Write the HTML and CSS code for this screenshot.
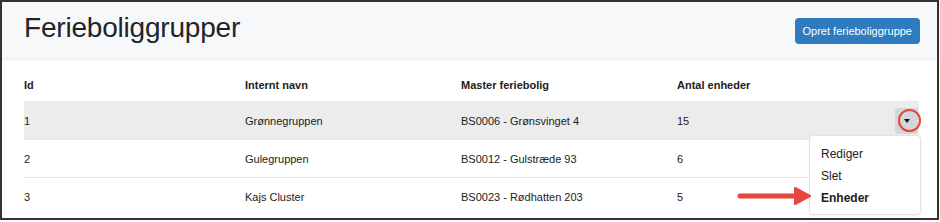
FILE: index.html
```html
<!DOCTYPE html>
<html lang="da">
<head>
<meta charset="UTF-8">
<meta name="viewport" content="width=device-width, initial-scale=1.0">
<title>Ferieboliggrupper</title>
<link rel="stylesheet" href="styles.css">
</head>
<body>
<div class="frame">
    <div class="page-header">
        <h1>Ferieboliggrupper</h1>
        <button class="btn-primary">Opret ferieboliggruppe</button>
    </div>

    <div class="content">
        <table class="group-table">
            <thead>
                <tr>
                    <th>Id</th>
                    <th>Internt navn</th>
                    <th>Master feriebolig</th>
                    <th>Antal enheder</th>
                    <th class="actions"></th>
                </tr>
            </thead>
            <tbody>
                <tr class="active">
                    <td>1</td>
                    <td>Grønnegruppen</td>
                    <td>BS0006 - Grønsvinget 4</td>
                    <td>15</td>
                    <td class="actions">
                        <span class="toggle"><span class="caret"></span></span>
                    </td>
                </tr>
                <tr>
                    <td>2</td>
                    <td>Gulegruppen</td>
                    <td>BS0012 - Gulstræde 93</td>
                    <td>6</td>
                    <td class="actions"></td>
                </tr>
                <tr>
                    <td>3</td>
                    <td>Kajs Cluster</td>
                    <td>BS0023 - Rødhatten 203</td>
                    <td>5</td>
                    <td class="actions"></td>
                </tr>
            </tbody>
        </table>

        <ul class="dropdown-menu">
            <li>Rediger</li>
            <li>Slet</li>
            <li class="strong">Enheder</li>
        </ul>

        <!-- annotation -->
        <svg class="arrow" width="76" height="20" viewBox="0 0 76 20">
            <line x1="3" y1="10" x2="62" y2="10" stroke="#e8453c" stroke-width="5" stroke-linecap="round"/>
            <polygon points="58,2 73,10 58,18" fill="#e8453c" stroke="#e8453c" stroke-width="2" stroke-linejoin="round"/>
        </svg>
        <span class="ring"></span>
    </div>
</div>
</body>
</html>
```

FILE: styles.css
```css
body {
    font-family: "Liberation Sans", Arial, sans-serif;
    margin: 0;
    background-color: #fff;
    color: #222;
}
.frame {
    width: 939px;
    height: 220px;
    box-sizing: border-box;
    border: 2px solid #333;
    overflow: hidden;
}
.page-header {
    display: flex;
    align-items: center;
    justify-content: space-between;
    height: 56px;
    padding: 0 17px 0 22px;
    background-color: #f7f8fa;
    box-shadow: 0 1px 2px rgba(0, 0, 0, 0.06);
    border-bottom: 1px solid #eceef0;
}
.page-header h1 {
    margin: 0;
    font-size: 28px;
    font-weight: normal;
    letter-spacing: -0.2px;
    color: #212529;
    padding-bottom: 4px;
}
.btn-primary {
    background-color: #2f7bbf;
    color: #fff;
    border: none;
    border-radius: 4px;
    font-family: inherit;
    font-size: 11px;
    height: 26px;
    padding: 0 8px;
    margin-top: 1px;
}
.content {
    position: relative;
    padding: 20px 19px 0 22px;
}
.group-table {
    width: 895px;
    border-collapse: collapse;
    font-size: 11px;
}
.group-table th {
    text-align: left;
    font-weight: bold;
    height: 22px;
    padding: 0;
    vertical-align: top;
}
.group-table th:nth-child(1),
.group-table td:nth-child(1) { width: 221px; }
.group-table th:nth-child(2),
.group-table td:nth-child(2) { width: 216px; }
.group-table th:nth-child(3),
.group-table td:nth-child(3) { width: 216px; }
.group-table td {
    height: 37px;
    padding: 0;
    border-top: 1px solid #e6e6e6;
    vertical-align: middle;
}
.group-table tr.active td {
    background-color: #ececec;
    border-top-color: #ececec;
}
.group-table .actions {
    width: 30px;
    text-align: right;
    padding-right: 1px;
}
.toggle {
    display: inline-flex;
    align-items: center;
    justify-content: center;
    width: 23px;
    height: 26px;
    border-radius: 3px;
    background-color: #d3d6da;
    vertical-align: middle;
}
.caret {
    width: 0;
    height: 0;
    border-left: 3px solid transparent;
    border-right: 3px solid transparent;
    border-top: 4px solid #111;
}
.ring {
    position: absolute;
    left: 896px;
    top: 50px;
    width: 19px;
    height: 19px;
    border: 2px solid #e8453c;
    border-radius: 50%;
}
.dropdown-menu {
    position: absolute;
    left: 807px;
    top: 76px;
    width: 110px;
    margin: 0;
    padding: 7px 0 5px;
    list-style: none;
    background-color: #fff;
    border: 1px solid #e1e3e6;
    border-radius: 4px;
    box-shadow: 0 1px 3px rgba(0, 0, 0, 0.06);
    font-size: 12px;
    color: #222;
}
.dropdown-menu li {
    padding: 0 11px;
    height: 22px;
    line-height: 22px;
}
.dropdown-menu li.strong {
    font-weight: bold;
}
.arrow {
    position: absolute;
    left: 735px;
    top: 127px;
}
```
